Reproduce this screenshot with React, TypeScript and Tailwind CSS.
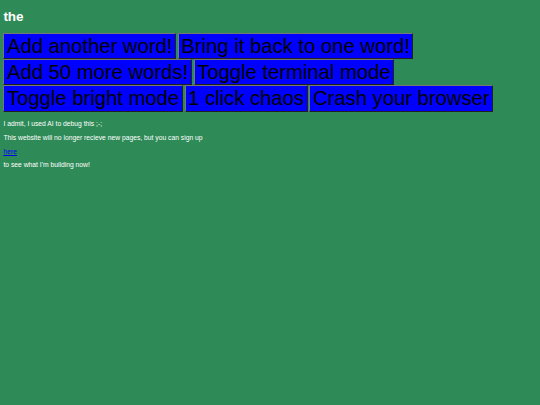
import React from "react";

const labels = [
  "Add another word!",
  "Bring it back to one word!",
  "Add 50 more words!",
  "Toggle terminal mode",
  "Toggle bright mode",
  "1 click chaos",
  "Crash your browser",
];

export default function App() {
  return (
    <div
      className="min-h-screen w-full bg-[#2e8b57] px-[3.375px] pt-[9px] text-white text-[6.75px] leading-[normal]"
      style={{ fontFamily: '"Liberation Sans", Arial, sans-serif' }}
    >
      <h1 className="m-0 mb-[9px] text-[13.5px] font-bold leading-[normal] text-white">the</h1>
      <div className="text-[6.75px] leading-[normal]">
        {labels.map((l, i) => (
          <React.Fragment key={l}>
            <button className="inline-block align-baseline bg-[#0000ff] text-black text-[20.25px] leading-[normal] px-[2.53px] py-[0.6px] border border-[#767676] [border-style:outset] cursor-default">
              {l}
            </button>
            {i < labels.length - 1 ? " " : null}
          </React.Fragment>
        ))}
      </div>
      <p className="mt-[8.5px] mb-[6.75px] text-white">I admit, I used AI to debug this ;-;</p>
      <p className="my-[6.75px] text-white">
        This website will no longer recieve new pages, but you can sign up
      </p>
      <p className="my-[6.75px]">
        <a href="#" className="text-[#0000ee] underline">here</a>
      </p>
      <p className="my-[6.75px] text-white">to see what I'm building now!</p>
    </div>
  );
}
